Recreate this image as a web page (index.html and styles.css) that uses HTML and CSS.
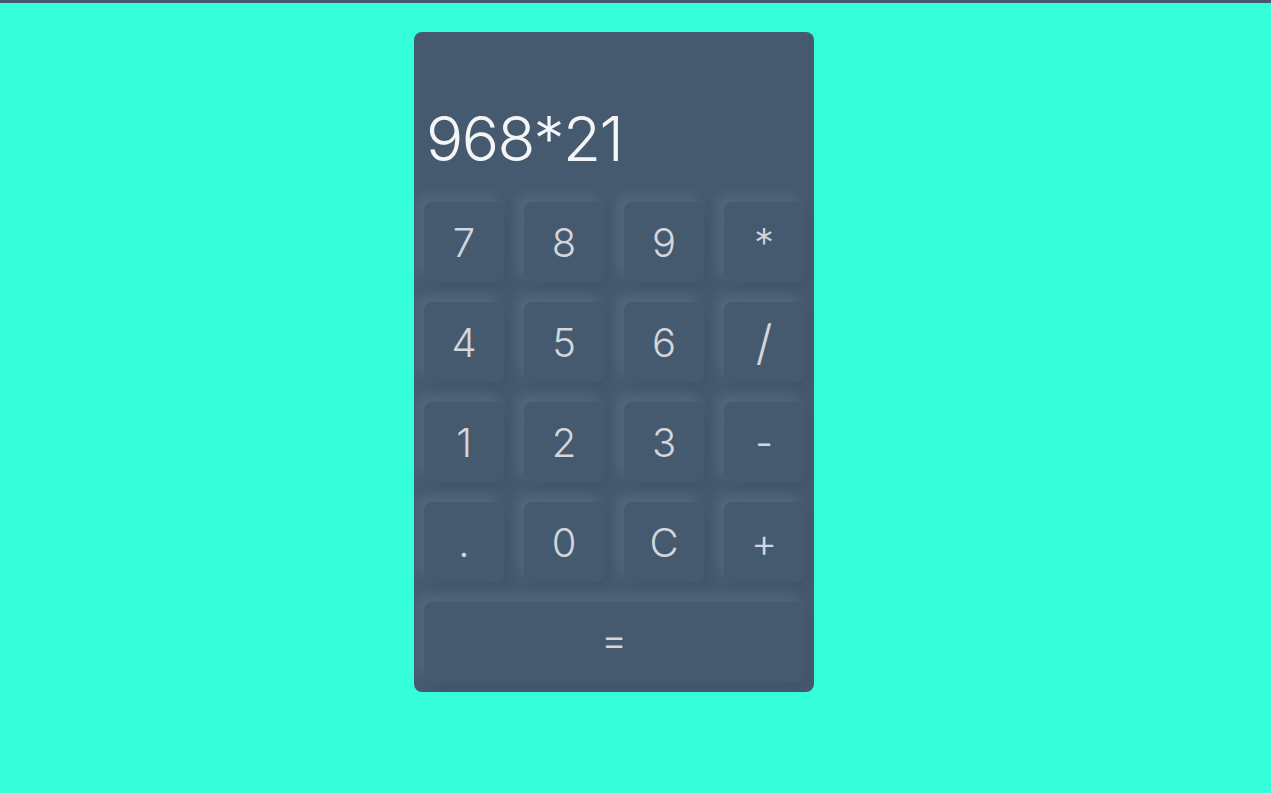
FILE: index.html
```html
<!DOCTYPE html>
<html>
<head>
<meta charset="utf-8">
<link rel="stylesheet" href="styles.css">
</head>
<body>
<div class="topbar"></div>
<main class="page">
  <div class="calc">
    <div class="display">968*21</div>
    <div class="keys">
      <button class="key">7</button>
      <button class="key">8</button>
      <button class="key">9</button>
      <button class="key">*</button>
      <button class="key">4</button>
      <button class="key">5</button>
      <button class="key">6</button>
      <button class="key key-slash">/</button>
      <button class="key">1</button>
      <button class="key">2</button>
      <button class="key">3</button>
      <button class="key">-</button>
      <button class="key">.</button>
      <button class="key">0</button>
      <button class="key">C</button>
      <button class="key">+</button>
      <button class="key key-wide">=</button>
    </div>
  </div>
</main>
</body>
</html>
```

FILE: styles.css
```css
html, body {
  margin: 0;
  padding: 0;
}
body {
  background: #35ffda;
  font-family: Inter, "Noto Sans", sans-serif;
  min-height: 793px;
}
.topbar {
  height: 3px;
  background: #46586c;
}
.page {
  display: flex;
  justify-content: center;
  padding-top: 29px;
  padding-right: 43px;
}
.calc {
  width: 400px;
  background: #465a6f;
  border-radius: 8px;
  padding: 0 10px 10px;
  box-sizing: border-box;
}
.display {
  height: 160px;
  display: flex;
  align-items: flex-end;
  padding: 0 2px 22px;
  box-sizing: border-box;
  color: #f4f5f7;
  font-size: 62px;
  font-weight: 300;
  line-height: 1;
  letter-spacing: -1.5px;
}
.keys {
  display: grid;
  grid-template-columns: repeat(4, 80px);
  grid-auto-rows: 80px;
  gap: 20px;
  padding-top: 10px;
}
.key {
  border: none;
  margin: 0;
  padding: 0;
  background: #465a6f;
  border-radius: 8px;
  color: #d3d6dc;
  font-family: inherit;
  font-size: 40px;
  font-weight: 300;
  box-shadow: -6px -6px 14px rgba(255,255,255,0.09), 6px 6px 14px rgba(0,0,0,0.07);
}
.key-slash {
  font-size: 48px;
}
.key-wide {
  grid-column: 1 / -1;
  padding-bottom: 6px;
}
```
